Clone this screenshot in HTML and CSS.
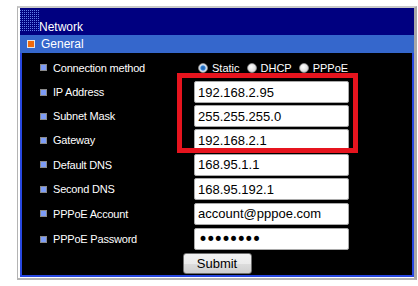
FILE: index.html
```html
<!DOCTYPE html>
<html lang="en">
<head>
  <meta charset="UTF-8" />
  <title>Network</title>
  <link rel="stylesheet" href="styles.css">
</head>
<body>
  <div class="frame">
    <div class="title">
      <span class="dots"></span>
      <span class="title-text">Network</span>
    </div>
    <div class="section"><span class="section-mark"></span>General</div>

    <form class="panel">
      <span class="label">Connection method</span>
      <span class="modes">
        <label class="mode"><input type="radio" name="mode" checked />Static</label>
        <label class="mode"><input type="radio" name="mode" />DHCP</label>
        <label class="mode"><input type="radio" name="mode" />PPPoE</label>
      </span>

      <span class="label">IP Address</span>
      <input class="field" type="text" name="ip" value="192.168.2.95" />

      <span class="label">Subnet Mask</span>
      <input class="field" type="text" name="mask" value="255.255.255.0" />

      <span class="label">Gateway</span>
      <input class="field" type="text" name="gateway" value="192.168.2.1" />

      <span class="label">Default DNS</span>
      <input class="field" type="text" name="dns1" value="168.95.1.1" />

      <span class="label">Second DNS</span>
      <input class="field" type="text" name="dns2" value="168.95.192.1" />

      <span class="label">PPPoE Account</span>
      <input class="field" type="text" name="account" value="account@pppoe.com" />

      <span class="label">PPPoE Password</span>
      <input class="field secret" type="password" name="password" value="password" />

      <div class="actions">
        <button type="submit">Submit</button>
      </div>
    </form>

    <div class="highlight"></div>
  </div>
</body>
</html>
```

FILE: styles.css
```css
body {
  margin: 0;
  background: #fff;
  font-family: 'Liberation Sans', Arial, sans-serif;
}

.frame {
  position: relative;
  width: 394px;
  margin: 6px 0 0 17px;
  padding: 0 0 1px 2px;
  border-top: 2px solid #c9c9c9;
  border-left: 1px solid #b4b4b4;
  border-right: 3px solid #a8a8a8;
  border-bottom: 2px solid #b4b4b4;
}

.title {
  height: 27px;
  background: #000080;
  display: flex;
  align-items: flex-start;
}

.dots {
  width: 19px;
  height: 21px;
  margin-top: 2px;
  background:
    linear-gradient(90deg, transparent 1px, #000080 1px) 0 0 / 2px 2px,
    linear-gradient(180deg, transparent 1px, #000080 1px) 0 0 / 2px 2px,
    #5f7fe8;
}

.title-text {
  margin-top: 12px;
  color: #fff;
  font-size: 12px;
  line-height: 14px;
}

.section {
  height: 18px;
  background: #3567cc;
  color: #fff;
  font-size: 12px;
  line-height: 18px;
  display: flex;
  align-items: center;
}

.section-mark {
  width: 6px;
  height: 6px;
  margin: 0 6px 0 7px;
  background: #f26a0c;
  border: 1px solid #e6e6e6;
}

.panel {
  margin: 0;
  padding: 2px 18px 0 18px;
  background: #000;
  border: 2px solid #2747e0;
  border-top: none;
  display: grid;
  grid-template-columns: 154px 155px 1fr;
  grid-template-rows: 25px 24px 24px 24px 25px 24px 25px 26px 23px;
  align-items: center;
}

.label {
  grid-column: 1;
  display: flex;
  align-items: center;
  color: #fff;
  font-size: 11px;
  letter-spacing: -0.2px;
}

.label::before {
  content: '';
  width: 5px;
  height: 5px;
  margin-right: 6px;
  background: #7d9cf6;
  border: 1px solid #8a8a8a;
}

.modes {
  grid-column: 2 / 4;
  display: flex;
  align-items: center;
  gap: 3px;
  color: #fff;
  font-size: 11px;
}

.mode {
  display: flex;
  align-items: center;
}

.mode input {
  appearance: none;
  width: 10px;
  height: 10px;
  margin: 0 4px;
  border: 1px solid #8b8b8b;
  border-radius: 50%;
  background: radial-gradient(circle at 40% 35%, #fff 0, #e4e4e4 55%, #b9b9b9 100%);
}

.mode input:checked {
  background: radial-gradient(circle, #1d5fa6 0, #2c7ad0 2px, #bcd6f2 3px, #e6e6e6 4px, #b9b9b9 100%);
}

.field {
  grid-column: 2;
  box-sizing: border-box;
  width: 155px;
  height: 22px;
  margin: 0;
  padding: 0 3px;
  border: 1px solid #a9a9a9;
  border-radius: 2px;
  background: #fff;
  color: #000;
  font-family: 'Liberation Sans', Arial, sans-serif;
  font-size: 13px;
}

.secret {
  font-family: 'DejaVu Sans', sans-serif;
  font-size: 17px;
  letter-spacing: -2.4px;
}

.actions {
  grid-column: 1 / -1;
  align-self: start;
  justify-self: center;
  margin-top: 1px;
}

button {
  width: 69px;
  height: 21px;
  padding: 0;
  border: 1px solid #707070;
  border-radius: 3px;
  background: linear-gradient(#f2f2f2, #ebebeb 50%, #dddddd 50%, #cfcfcf);
  color: #000;
  font-family: 'Liberation Sans', Arial, sans-serif;
  font-size: 13px;
  display: block;
}

/* annotation drawn over the screenshot */
.highlight {
  position: absolute;
  left: 159px;
  top: 65px;
  width: 181px;
  height: 80px;
  box-sizing: border-box;
  border: 5px solid #e6141e;
}
```
